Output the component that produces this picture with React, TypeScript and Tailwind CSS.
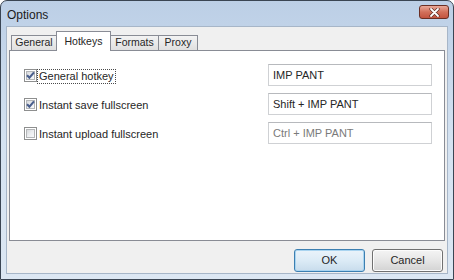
import React from 'react';

const font = { fontFamily: '"Liberation Sans", Arial, sans-serif' };

function CheckBox({ checked }: { checked: boolean }) {
  return (
    <div className="w-[13px] h-[13px] shrink-0 border border-[#8e8f8f] bg-white p-[1px]">
      <div className="relative w-full h-full border border-[#b4b6b8] bg-gradient-to-br from-[#d6d8db] via-[#eceef0] to-[#f8f9fa]">
        {checked && (
          <svg className="absolute -left-[1px] -top-[1px]" width="9" height="9" viewBox="0 0 9 9">
            <path d="M1 4.2 L3.4 6.6 L8 1.4" fill="none" stroke="#4a5f8d" strokeWidth="2.1" />
          </svg>
        )}
      </div>
    </div>
  );
}

function Row({ label, value, checked, focused, muted }: { label: string; value: string; checked: boolean; focused?: boolean; muted?: boolean }) {
  return (
    <div className="flex items-center h-[22px]">
      <CheckBox checked={checked} />
      <div className="flex-1 pl-[1px]">
        <span className={`inline-block leading-[13px] px-[1px] ${focused ? 'outline outline-1 outline-dotted outline-[#4a4a4a]' : ''} text-[11px] text-[#262626]`}>
          {label}
        </span>
      </div>
      <div className="w-[164px] h-[22px] border border-[#cfd1d4] border-t-[#b7b9bd] bg-white flex items-center pl-[4px]">
        <span className={`text-[11px] ${muted ? 'text-[#7a7a7a]' : 'text-[#262626]'}`}>{value}</span>
      </div>
    </div>
  );
}

function Tab({ label, active, width }: { label: string; active?: boolean; width: string }) {
  if (active) {
    return (
      <div className={`${width} relative z-10 -ml-px -mb-px h-[20px] border border-b-0 border-[#898c95] bg-white flex items-start justify-center pt-[2px] text-[10.5px] text-[#262626]`}>
        {label}
      </div>
    );
  }
  return (
    <div className={`${width} -ml-px h-[15px] border border-b-0 border-[#898c95] bg-gradient-to-b from-[#f3f3f3] to-[#e0e0e0] flex items-center justify-center text-[10.5px] text-[#262626]`}>
      {label}
    </div>
  );
}

export default function App() {
  return (
    <div className="w-[454px] h-[280px] overflow-hidden bg-white" style={font}>
      <div className="w-[454px] h-[280px] rounded-t-[7px] border border-[#3a4553] bg-gradient-to-b from-[#bccfe6] via-[#d4e2f1] to-[#dce7f3] flex flex-col px-[5px] pb-[5px]">
        {/* title bar */}
        <div className="h-[25px] flex items-start justify-between">
          <span className="pl-[1px] pt-[5px] text-[12px] text-[#1b1b1b]">Options</span>
          <div className="mt-[4px] -mr-[1px] w-[30px] h-[14px] rounded-[3px] border border-[#6b2f24] bg-gradient-to-b from-[#e9a898] via-[#d2705b] to-[#c35440] flex items-center justify-center">
            <svg width="11" height="9" viewBox="0 0 11 9">
              <path d="M2 1 L9 8 M9 1 L2 8" stroke="#5a2a22" strokeWidth="3.2" strokeLinecap="round" />
              <path d="M2 1 L9 8 M9 1 L2 8" stroke="#ffffff" strokeWidth="1.8" strokeLinecap="round" />
            </svg>
          </div>
        </div>

        {/* client area */}
        <div className="flex-1 border border-[#a7b6c8] bg-[#f0f0f0] flex flex-col px-[2px] pt-[4px]">
          <div className="h-[19px] flex items-end pl-[3px]">
            <Tab label="General" width="w-[46px]" />
            <Tab label="Hotkeys" width="w-[55px]" active />
            <Tab label="Formats" width="w-[49px]" />
            <Tab label="Proxy" width="w-[40px]" />
          </div>

          <div className="h-[191px] border border-[#898c95] bg-white flex flex-col gap-[7px] pt-[13px] pl-[14px] pr-[12px]">
            <Row label="General hotkey" value="IMP PANT" checked focused />
            <Row label="Instant save fullscreen" value="Shift + IMP PANT" checked />
            <Row label="Instant upload fullscreen" value="Ctrl + IMP PANT" checked={false} muted />
          </div>

          <div className="mt-[8px] flex justify-end gap-[7px] pr-[2px]">
            <button className="w-[71px] h-[23px] rounded-[3px] border border-[#3c7fb1] bg-gradient-to-b from-[#eaf3fa] via-[#dcebf6] to-[#c8dcec] shadow-[inset_0_0_0_1px_#a9d4f0] text-[11px] text-[#262626]">
              OK
            </button>
            <button className="w-[71px] h-[23px] rounded-[3px] border border-[#707070] bg-gradient-to-b from-[#f4f4f4] via-[#e6e6e6] to-[#d3d3d3] shadow-[inset_0_0_0_1px_#fcfcfc] text-[11px] text-[#262626]">
              Cancel
            </button>
          </div>
        </div>
      </div>
    </div>
  );
}
